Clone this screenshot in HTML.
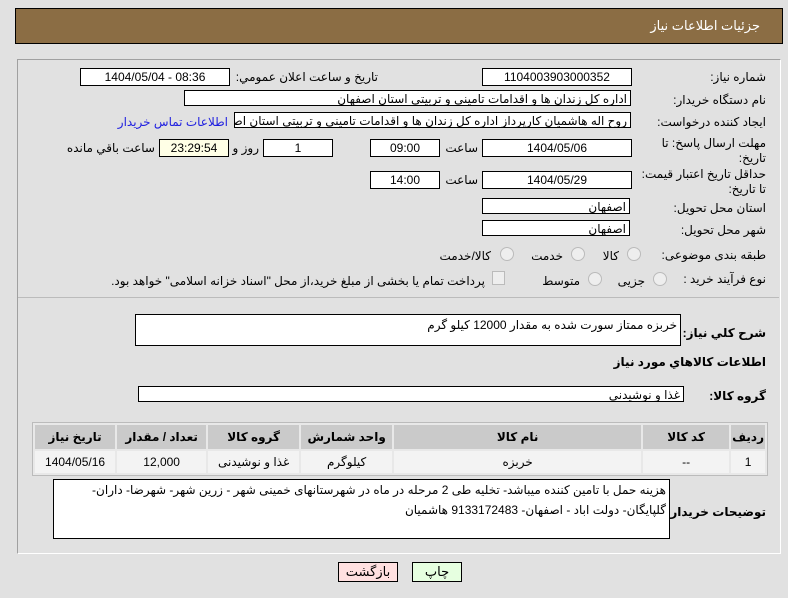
<!DOCTYPE html>
<html><head><meta charset="utf-8"><style>
body{margin:0;width:788px;height:598px;background:#e1e1e1;font-family:"Liberation Sans","DejaVu Sans",sans-serif;font-size:12px;color:#000;position:relative;overflow:hidden}
.a{position:absolute}
.hd{left:15px;top:8px;width:766px;height:34px;background:#8b6d44;border:1px solid #000;}
.hd span{position:absolute;right:22px;top:9px;color:#fff;font-size:13px}
.panel{left:17px;top:59px;width:762px;height:493px;border:1px solid #a0a0a0;border-bottom-color:#fff;border-right-color:#fff}
.box{position:absolute;background:#fff;border:1px solid #000;height:16px;line-height:16px;text-align:center;font-size:12px;white-space:nowrap;overflow:hidden}
.r{direction:rtl;text-align:right;padding-right:3px;box-sizing:border-box}
.lbl{position:absolute;white-space:nowrap;direction:rtl;font-size:12px}
.b{font-weight:bold}
.rad{position:absolute;width:12px;height:12px;border-radius:50%;border:1px solid #bbb;background:#eee}
table{border-collapse:separate;border-spacing:2px;position:absolute;left:32px;top:422px;width:736px;border:1px solid #bbb;direction:rtl;background:#e8e8e8}
th{background:#cacaca;height:22px;font-size:12px}
td{background:#f3f3f3;height:20px;text-align:center;font-size:12px}
.btn{position:absolute;top:562px;height:18px;border:1px solid #000;text-align:center;line-height:18px;font-size:13px}
</style></head><body>
<div class="a hd"><span>جزئیات اطلاعات نیاز</span></div>
<div class="a panel"></div>
<div class="a" style="left:18px;top:297px;width:761px;border-top:1px solid #bbb"></div>

<div class="lbl" style="right:22px;top:70px">شماره نیاز:</div>
<div class="box" style="left:482px;top:68px;width:148px">1104003903000352</div>
<div class="lbl" style="right:410px;top:70px">تاريخ و ساعت اعلان عمومي:</div>
<div class="box" style="left:80px;top:68px;width:148px">1404/05/04 - 08:36</div>

<div class="lbl" style="right:22px;top:93px">نام دستگاه خریدار:</div>
<div class="box r" style="left:184px;top:90px;width:447px">اداره کل زندان ها و اقدامات تامینی و تربیتی استان اصفهان</div>

<div class="lbl" style="right:22px;top:115px">ایجاد کننده درخواست:</div>
<div class="box r" style="left:234px;top:112px;width:397px">روح اله هاشمیان کارپرداز اداره کل زندان ها و اقدامات تامینی و تربیتی استان اصفهان</div>
<div class="lbl" style="right:560px;top:115px;color:#2020e0">اطلاعات تماس خریدار</div>

<div class="lbl" style="right:22px;top:136px;line-height:15px">مهلت ارسال پاسخ: تا<br>تاریخ:</div>
<div class="box" style="left:482px;top:139px;width:148px">1404/05/06</div>
<div class="lbl" style="right:310px;top:141px">ساعت</div>
<div class="box" style="left:370px;top:139px;width:68px">09:00</div>
<div class="box" style="left:263px;top:139px;width:68px">1</div>
<div class="lbl" style="right:529px;top:141px">روز و</div>
<div class="box" style="left:159px;top:139px;width:68px;background:#ffffe6">23:29:54</div>
<div class="lbl" style="right:633px;top:141px">ساعت باقي مانده</div>

<div class="lbl" style="right:22px;top:167px;line-height:15px">حداقل تاریخ اعتبار قیمت:<br>تا تاریخ:</div>
<div class="box" style="left:482px;top:171px;width:148px">1404/05/29</div>
<div class="lbl" style="right:310px;top:173px">ساعت</div>
<div class="box" style="left:370px;top:171px;width:68px">14:00</div>

<div class="lbl" style="right:22px;top:201px">استان محل تحویل:</div>
<div class="box r" style="left:482px;top:198px;width:148px">اصفهان</div>
<div class="lbl" style="right:22px;top:223px">شهر محل تحويل:</div>
<div class="box r" style="left:482px;top:220px;width:148px">اصفهان</div>

<div class="lbl" style="right:22px;top:248px">طبقه بندی موضوعی:</div>
<div class="rad" style="left:627px;top:247px"></div><div class="lbl" style="right:169px;top:249px">کالا</div>
<div class="rad" style="left:571px;top:247px"></div><div class="lbl" style="right:225px;top:249px">خدمت</div>
<div class="rad" style="left:500px;top:247px"></div><div class="lbl" style="right:297px;top:249px">کالا/خدمت</div>

<div class="lbl" style="right:22px;top:272px">نوع فرآیند خرید :</div>
<div class="rad" style="left:653px;top:272px"></div><div class="lbl" style="right:143px;top:274px">جزیی</div>
<div class="rad" style="left:588px;top:272px"></div><div class="lbl" style="right:208px;top:274px">متوسط</div>
<div class="a" style="left:492px;top:271px;width:11px;height:12px;border:1px solid #bbb;background:#eee"></div>
<div class="lbl" style="right:303px;top:274px">پرداخت تمام یا بخشی از مبلغ خرید،از محل "اسناد خزانه اسلامی" خواهد بود.</div>

<div class="lbl b" style="right:22px;top:326px">شرح کلي نیاز:</div>
<div class="box r" style="left:135px;top:314px;width:546px;height:32px;line-height:20px;text-align:right">خربزه ممتاز سورت شده به مقدار 12000 کیلو گرم</div>
<div class="lbl b" style="right:22px;top:355px">اطلاعات کالاهاي مورد نياز</div>
<div class="lbl b" style="right:22px;top:389px">گروه کالا:</div>
<div class="box r" style="left:138px;top:386px;width:546px">غذا و نوشیدنی</div>

<table>
<tr><th style="width:24px">ردیف</th><th style="width:84px">کد کالا</th><th style="width:245px">نام کالا</th><th style="width:89px">واحد شمارش</th><th style="width:89px">گروه کالا</th><th style="width:87px">تعداد / مقدار</th><th>تاریخ نیاز</th></tr>
<tr><td>1</td><td>--</td><td>خربزه</td><td>کیلوگرم</td><td>غذا و نوشیدنی</td><td>12,000</td><td>1404/05/16</td></tr>
</table>

<div class="lbl b" style="right:22px;top:505px">توضیحات خریدار:</div>
<div class="box r" style="left:53px;top:479px;width:617px;height:60px;line-height:20px;white-space:normal;text-align:right">هزینه حمل با تامین کننده میباشد- تخلیه طی 2 مرحله در ماه در شهرستانهای خمینی شهر - زرین شهر- شهرضا- داران- گلپایگان- دولت اباد - اصفهان- 9133172483 هاشمیان</div>

<div class="btn" style="left:338px;width:58px;background:#ffe0e0">بازگشت</div>
<div class="btn" style="left:412px;width:48px;background:#e6ffe0">چاپ</div>
</body></html>
